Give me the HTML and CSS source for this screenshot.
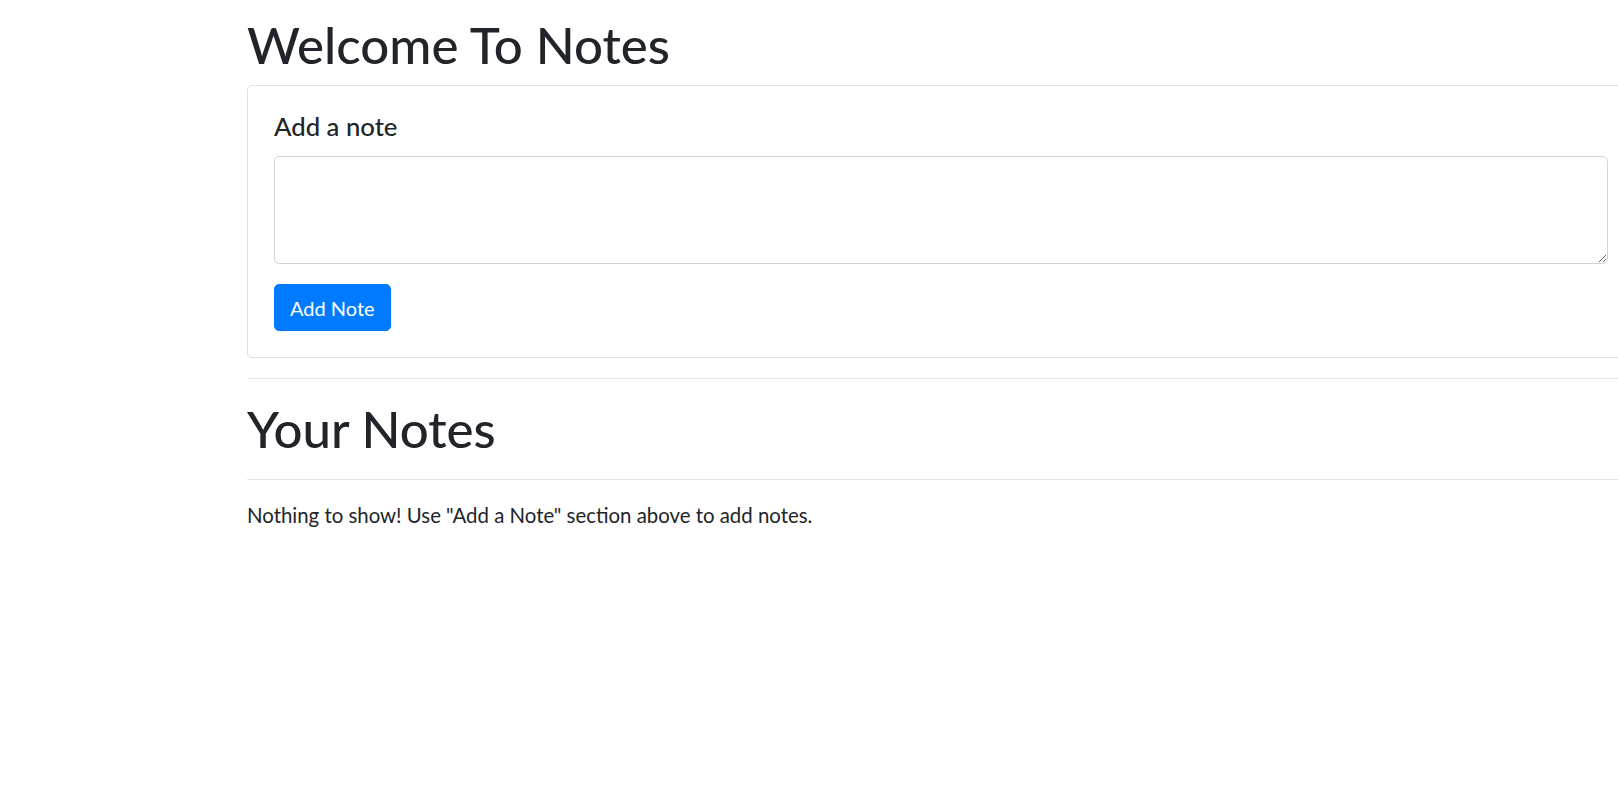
FILE: index.html
```html
<!DOCTYPE html>
<html>
<head>
<meta charset="utf-8">
<link rel="stylesheet" href="styles.css">
</head>
<body>
<div class="container">
  <h1 class="title">Welcome To Notes</h1>
  <div class="card">
    <h5 class="card-title">Add a note</h5>
    <div class="form-group">
      <textarea class="form-control" rows="3"></textarea>
    </div>
    <button class="btn">Add Note</button>
  </div>
  <hr>
  <h1 class="title">Your Notes</h1>
  <hr>
  <p class="empty">Nothing to show! Use "Add a Note" section above to add notes.</p>
</div>
</body>
</html>
```
FILE: styles.css
```css
html { overflow-x: hidden; }
body {
  margin: 0;
  font-family: Lato, "Liberation Sans", Arial, sans-serif;
  font-size: 20.4px;
  line-height: 30px;
  color: #212529;
  background: #fff;
}
.container {
  width: 1388px;
  margin-left: 247px;
  padding-top: 15px;
}
.title {
  font-size: 51px;
  font-weight: 500;
  line-height: 60px;
  margin: 0 0 10px 0;
}
.card {
  border: 1px solid rgba(0,0,0,.125);
  border-radius: 5px;
  padding: 25px 26px 26px;
}
.card-title {
  font-size: 25.7px;
  font-weight: 500;
  line-height: 30px;
  margin: 0 0 15px 0;
}
.form-group { margin-bottom: 20px; }
.form-control {
  display: block;
  box-sizing: border-box;
  width: 100%;
  height: 108px;
  border: 1px solid #ced4da;
  border-radius: 5px;
  padding: 7px 15px;
  font: inherit;
  resize: vertical;
}
.btn {
  display: inline-block;
  box-sizing: border-box;
  height: 47px;
  padding: 0 15px;
  background: #007bff;
  color: #fff;
  border: 1px solid #007bff;
  border-radius: 5px;
  font-family: inherit;
  font-size: 20px;
  line-height: 30px;
}
hr {
  border: 0;
  border-top: 1px solid rgba(0,0,0,.1);
  margin: 20px 0;
}
.empty { margin: 0; }
```
